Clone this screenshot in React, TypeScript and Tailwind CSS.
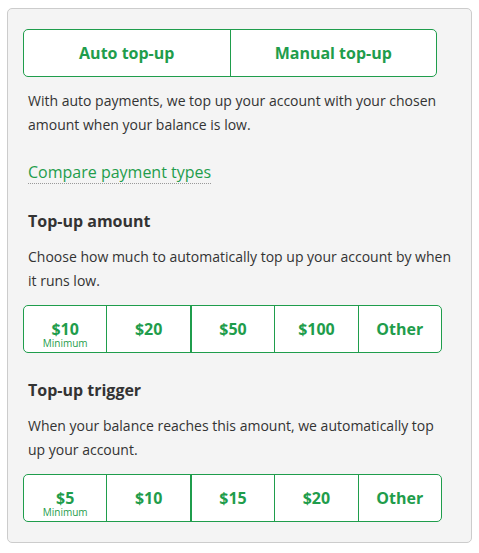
const amounts = [
  { label: '$10', min: true },
  { label: '$20' },
  { label: '$50' },
  { label: '$100' },
  { label: 'Other' },
];

const triggers = [
  { label: '$5', min: true },
  { label: '$10' },
  { label: '$15' },
  { label: '$20' },
  { label: 'Other' },
];

type Opt = { label: string; min?: boolean };

function OptionGroup({ options }: { options: Opt[] }) {
  return (
    <div className="-ml-[5px] mt-3 flex h-12 w-[419px] overflow-hidden rounded-[5px] border border-[#1f9d4c] bg-white">
      {options.map((o, i) => (
        <button
          key={o.label}
          className={
            'relative flex flex-1 items-center justify-center text-[16px] font-bold text-[#1f9d4c] ' +
            (i === 0 ? '' : i === 2 ? 'border-l-2 border-[#1f9d4c]' : 'border-l border-[#1f9d4c]')
          }
        >
          <span className="leading-4">{o.label}</span>
          {o.min && (
            <span className="absolute inset-x-0 bottom-[4px] text-center text-[10px] font-normal leading-[10px]">
              Minimum
            </span>
          )}
        </button>
      ))}
    </div>
  );
}

export default function App() {
  return (
    <div className="min-h-screen bg-white pl-[7px] pt-2 font-['Open_Sans',sans-serif] text-[#333]">
      <div className="w-[465px] rounded-[5px] border border-[#cccccc] bg-[#f4f4f4] p-5">
        {/* payment type toggle */}
        <div className="-ml-[5px] flex h-12 w-[414px] overflow-hidden rounded-[5px] border border-[#1f9d4c] bg-white">
          <button className="flex-1 text-[16px] font-bold text-[#1f9d4c]">Auto top-up</button>
          <button className="flex-1 border-l border-[#1f9d4c] text-[16px] font-bold text-[#1f9d4c]">
            Manual top-up
          </button>
        </div>

        <p className="mt-3 text-[14px] leading-6">
          With auto payments, we top up your account with your chosen amount when your balance is low.
        </p>

        <div className="mt-[23px] text-[16px] leading-6">
          <a className="border-b border-dotted border-[#999] text-[#1f9d4c]">Compare payment types</a>
        </div>

        {/* amount */}
        <h2 className="mt-[25px] text-[16px] font-bold leading-6">Top-up amount</h2>
        <p className="mt-3 text-[14px] leading-6">
          Choose how much to automatically top up your account by when it runs low.
        </p>
        <OptionGroup options={amounts} />

        {/* trigger */}
        <h2 className="mt-[25px] text-[16px] font-bold leading-6">Top-up trigger</h2>
        <p className="mt-3 text-[14px] leading-6">
          When your balance reaches this amount, we automatically top up your account.
        </p>
        <OptionGroup options={triggers} />
      </div>
    </div>
  );
}
